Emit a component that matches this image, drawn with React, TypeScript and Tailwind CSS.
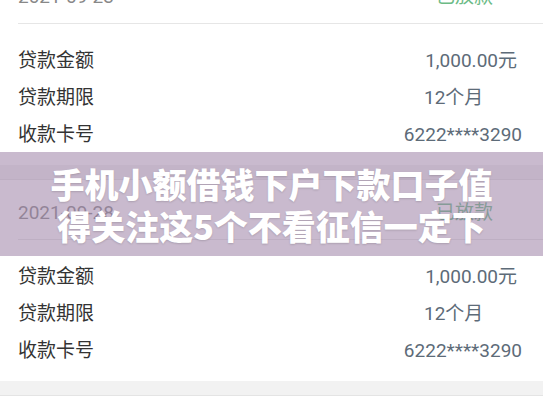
const loans = [
  { date: "2021-09-23", amount: "1,000.00元", term: "12个月", card: "6222****3290" },
  { date: "2021-09-28", amount: "1,000.00元", term: "12个月", card: "6222****3290" },
];

function LoanCard({ loan }: { loan: (typeof loans)[number] }) {
  return (
    <div className="bg-white">
      <div className="ml-[18px] flex items-center justify-between border-b border-[#e6e6e6] pt-[21px] pb-[14px] pr-[50px] h-[60px]">
        <span className="text-[19px] leading-[24px] text-[#888]">{loan.date}</span>
        <span className="text-[19px] leading-[24px] text-[#6cbb86]">已放款</span>
      </div>
      <div className="pt-[18px] pb-[12px]">
        <div className="flex h-[37px] items-center justify-between pl-[18px] pr-[26px]">
          <span className="text-[#333]">贷款金额</span>
          <span className="text-[#5d6b78]">{loan.amount}</span>
        </div>
        <div className="flex h-[37px] items-center pl-[18px]">
          <span className="text-[#333]">贷款期限</span>
          <span className="ml-[330px] text-[#5d6b78]">{loan.term}</span>
        </div>
        <div className="flex h-[37px] items-center justify-between pl-[18px] pr-[21px]">
          <span className="text-[#333]">收款卡号</span>
          <span className="text-[#5d6b78]">{loan.card}</span>
        </div>
      </div>
    </div>
  );
}

export default function App() {
  return (
    <div
      className="relative h-[408px] w-[543px] overflow-hidden bg-white text-[19px] leading-[24px]"
      style={{ fontFamily: 'Roboto, "Noto Sans CJK SC", sans-serif' }}
    >
      <div className="-mt-[36px]">
        {loans.map((loan, i) => (
          <div key={i}>
            <LoanCard loan={loan} />
            <div className="h-[15px] border-b border-[#e4e4e4] bg-[#f2f2f2]" />
          </div>
        ))}
      </div>
      <div className="absolute left-0 right-0 top-[152px] flex h-[104px] flex-col items-center justify-center bg-[rgba(156,130,166,0.55)] pt-[2px]">
        <p
          className="text-center text-[34px] font-black leading-[42px] text-white [text-shadow:0_1px_2px_rgba(0,0,0,0.15)]"
          style={{ fontFamily: '"Noto Sans CJK SC", sans-serif' }}
        >
          手机小额借钱下户下款口子值
          <br />
          得关注这5个不看征信一定下
        </p>
      </div>
    </div>
  );
}
